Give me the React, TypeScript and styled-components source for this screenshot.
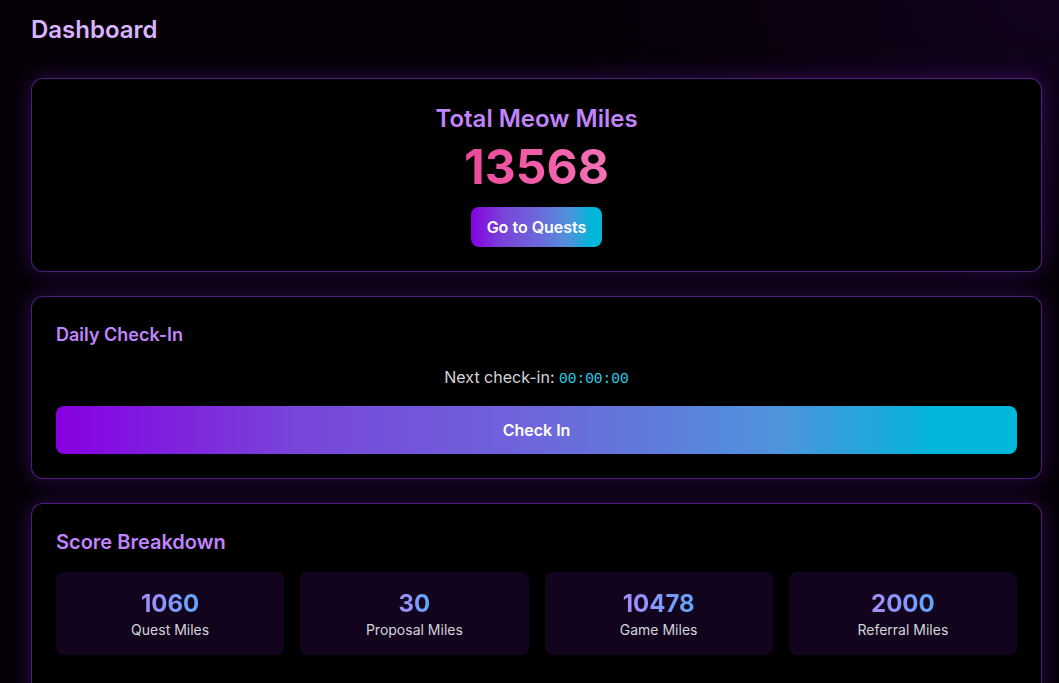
import React from 'react';
import styled, { createGlobalStyle } from 'styled-components';

const GlobalStyle = createGlobalStyle`
  html, body {
    margin: 0;
    padding: 0;
    background: #040006;
  }
  body {
    font-family: Inter, "Noto Sans", "Liberation Sans", sans-serif;
    color: #e5e7eb;
  }
`;

const Page = styled.div`
  min-height: 683px;
  box-sizing: border-box;
  padding: 14px 17px 40px 31px;
  background:
    radial-gradient(ellipse 700px 420px at 100% 0%, rgba(55, 8, 85, 0.3), transparent 70%),
    #040006;
  overflow: hidden;
`;

const Title = styled.h1`
  margin: 0 0 32px;
  font-size: 24px;
  line-height: 32px;
  font-weight: 600;
  color: #d8b4fe;
`;

const Stack = styled.div`
  display: flex;
  flex-direction: column;
  gap: 24px;
`;

const Card = styled.section<{ $center?: boolean; $tall?: boolean }>`
  background: #000;
  border: 1px solid rgba(147, 51, 234, 0.55);
  border-radius: 12px;
  padding: 24px 24px ${p => (p.$tall ? '48px' : '24px')};
  box-shadow: 0 0 22px rgba(126, 34, 206, 0.35);
  display: flex;
  flex-direction: column;
  align-items: ${p => (p.$center ? 'center' : 'stretch')};
`;

const HeroLabel = styled.h2`
  margin: 0;
  font-size: 24px;
  line-height: 32px;
  font-weight: 600;
  color: #c084fc;
`;

const HeroNumber = styled.div`
  margin-top: 8px;
  font-size: 48px;
  line-height: 48px;
  font-weight: 700;
  background: linear-gradient(to right, #ec4899, #f472b6);
  -webkit-background-clip: text;
  background-clip: text;
  color: transparent;
`;

const GradientButton = styled.button<{ $wide?: boolean }>`
  border: none;
  cursor: pointer;
  font-family: inherit;
  font-weight: 600;
  font-size: 16px;
  color: #fff;
  border-radius: 8px;
  background: linear-gradient(
    to right,
    #8600e2 0%,
    #7845d9 25%,
    #6e66dc 50%,
    #4f93db 75%,
    #00b6d9 92%,
    #00b8d9 100%
  );
  margin-top: 16px;
  padding: 0 16px;
  line-height: 24px;
  height: ${p => (p.$wide ? '48px' : '40px')};
  width: ${p => (p.$wide ? '100%' : 'auto')};
`;

const SectionTitle = styled.h3<{ $size: number }>`
  margin: 0 0 16px;
  font-size: ${p => p.$size}px;
  line-height: 28px;
  font-weight: 600;
  color: #c084fc;
`;

const NextLine = styled.p`
  margin: 0;
  height: 25px;
  text-align: center;
  font-size: 16px;
  line-height: 25px;
  color: #d1d5db;
`;

const Timer = styled.span`
  font-family: "Liberation Mono", "DejaVu Sans Mono", monospace;
  font-size: 14.5px;
  line-height: 1;
  color: #22d3ee;
`;

const Grid = styled.div`
  display: grid;
  grid-template-columns: repeat(4, 1fr);
  gap: 16px;
`;

const Tile = styled.div`
  background: #12041c;
  border-radius: 8px;
  padding: 16px;
  text-align: center;
`;

const TileValue = styled.div`
  font-size: 24px;
  line-height: 32px;
  font-weight: 700;
  background: linear-gradient(to right, #a78bfa, #60a5fa);
  -webkit-background-clip: text;
  background-clip: text;
  color: transparent;
  display: inline-block;
`;

const TileLabel = styled.div`
  font-size: 14px;
  line-height: 19px;
  color: #d1d5db;
`;

const scores = [
  { value: 1060, label: 'Quest Miles' },
  { value: 30, label: 'Proposal Miles' },
  { value: 10478, label: 'Game Miles' },
  { value: 2000, label: 'Referral Miles' },
];

export default function App() {
  return (
    <>
      <GlobalStyle />
      <Page>
        <Title>Dashboard</Title>
        <Stack>
          <Card $center>
            <HeroLabel>Total Meow Miles</HeroLabel>
            <HeroNumber>13568</HeroNumber>
            <GradientButton>Go to Quests</GradientButton>
          </Card>

          <Card>
            <SectionTitle $size={18}>Daily Check-In</SectionTitle>
            <NextLine>
              Next check-in: <Timer>00:00:00</Timer>
            </NextLine>
            <GradientButton $wide>Check In</GradientButton>
          </Card>

          <Card $tall>
            <SectionTitle $size={20}>Score Breakdown</SectionTitle>
            <Grid>
              {scores.map(s => (
                <Tile key={s.label}>
                  <TileValue>{s.value}</TileValue>
                  <TileLabel>{s.label}</TileLabel>
                </Tile>
              ))}
            </Grid>
          </Card>
        </Stack>
      </Page>
    </>
  );
}
